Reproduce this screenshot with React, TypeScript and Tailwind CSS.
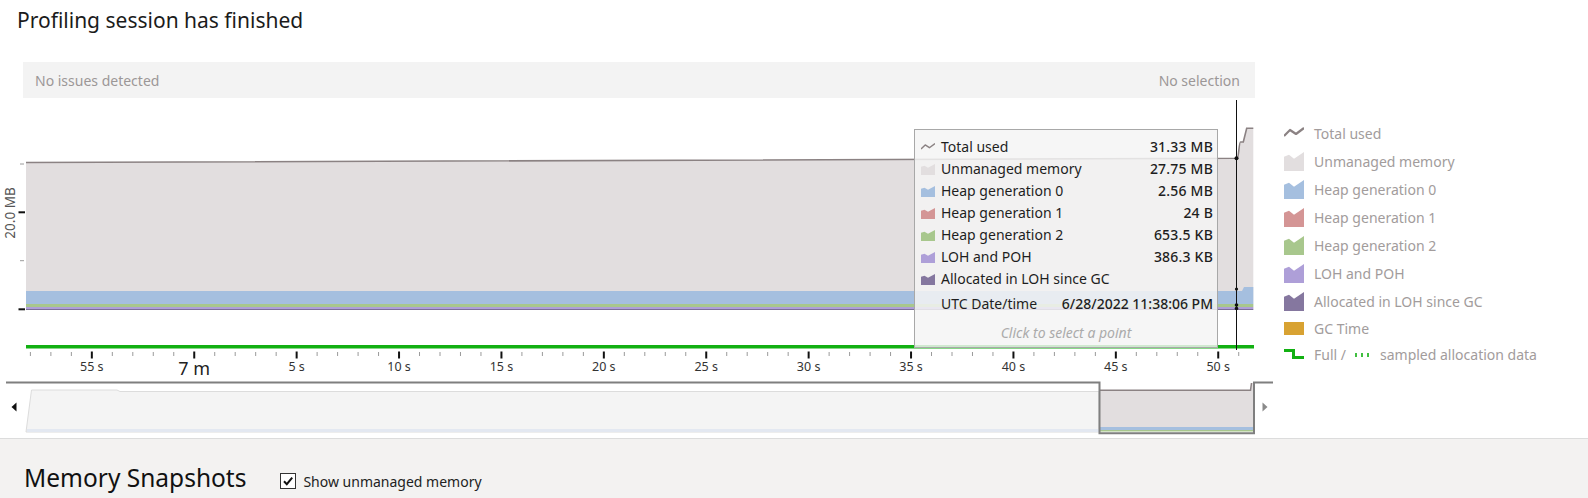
import React from 'react';

const C = {
  total: '#8b8283',
  unmanaged: '#e2dedf',
  gen0: '#a5bfdf',
  gen1: '#d49595',
  gen2: '#a8c78d',
  loh: '#ae9fd8',
  alloc: '#85779f',
  gc: '#d8a232',
  green: '#12b012',
};

const AreaIcon: React.FC<{ color: string; w: number; h: number }> = ({ color, w, h }) => (
  <svg width={w} height={h} viewBox="0 0 20 20" preserveAspectRatio="none" className="shrink-0">
    <path d="M0 20V5L5 3L10 7L20 0V20Z" fill={color} />
  </svg>
);

const LineIcon: React.FC<{ w: number; h: number; sw: number }> = ({ w, h, sw }) => (
  <svg width={w} height={h} viewBox="0 0 20 20" className="shrink-0">
    <path d="M0 13L6 7L12 11L20 5" fill="none" stroke={C.total} strokeWidth={sw} strokeLinejoin="round" />
  </svg>
);

const tooltipRows = [
  { label: 'Total used', value: '31.33 MB', color: '' },
  { label: 'Unmanaged memory', value: '27.75 MB', color: C.unmanaged },
  { label: 'Heap generation 0', value: '2.56 MB', color: C.gen0 },
  { label: 'Heap generation 1', value: '24 B', color: C.gen1 },
  { label: 'Heap generation 2', value: '653.5 KB', color: C.gen2 },
  { label: 'LOH and POH', value: '386.3 KB', color: C.loh },
  { label: 'Allocated in LOH since GC', value: '', color: C.alloc },
];

const legendRows = [
  { label: 'Total used', color: '' },
  { label: 'Unmanaged memory', color: C.unmanaged },
  { label: 'Heap generation 0', color: C.gen0 },
  { label: 'Heap generation 1', color: C.gen1 },
  { label: 'Heap generation 2', color: C.gen2 },
  { label: 'LOH and POH', color: C.loh },
  { label: 'Allocated in LOH since GC', color: C.alloc },
];

const SEC = 20.48;
const X0 = 30.4;
const ticks = Array.from({ length: 60 }, (_, i) => i);

const tickLabel = (i: number) => (i === 3 ? '55 s' : i === 8 ? '7 m' : `${i - 8} s`);

const MemoryChart: React.FC = () => (
  <div className="relative w-[1275px] h-[280px] shrink-0">
    <svg width={1275} height={280} className="block overflow-visible">
      {/* stacked areas */}
      <path
        d="M26 64.5L1237.3 60.3C1238.6 60.3 1239 44 1240.5 44L1243.3 44L1246.7 30.3L1253.3 30.3L1253.3 212L26 212Z"
        fill={C.unmanaged}
      />
      <path d="M26 193H1242L1244 189H1253.3V206H26Z" fill={C.gen0} />
      <rect x={26} y={206} width={1227.3} height={3} fill={C.gen2} />
      <rect x={26} y={209} width={1227.3} height={2} fill={C.loh} />
      <rect x={26} y={211} width={1227.3} height={1} fill="#7d7097" />
      <path
        d="M26 64.5L1237.3 60.3C1238.6 60.3 1239 44 1240.5 44L1243.3 44L1246.7 30.3L1253.3 30.3"
        fill="none"
        stroke={C.total}
        strokeWidth={1.6}
      />

      {/* y axis */}
      <line x1={20} x2={24} y1={66} y2={66} stroke="#9a9a9a" />
      <line x1={18.5} x2={25} y1={114.3} y2={114.3} stroke="#111" strokeWidth={2} />
      <line x1={20} x2={24} y1={162.7} y2={162.7} stroke="#9a9a9a" />
      <line x1={18.5} x2={25} y1={211.3} y2={211.3} stroke="#111" strokeWidth={2} />
      <text
        x={0}
        y={0}
        transform="translate(15 115) rotate(-90)"
        textAnchor="middle"
        fontSize={13.5}
        fill="#555"
        fontFamily="Noto Sans, sans-serif"
      >
        20.0 MB
      </text>

      {/* allocation data line */}
      <rect x={26} y={247} width={1228} height={3.5} fill={C.green} />

      {/* time axis */}
      {ticks.map((i) => {
        const x = X0 + i * SEC;
        const major = i % 5 === 3;
        return major ? (
          <line key={i} x1={x} x2={x} y1={253.5} y2={260.5} stroke="#111" strokeWidth={2} />
        ) : (
          <line key={i} x1={x} x2={x} y1={254} y2={258} stroke="#9a9a9a" />
        );
      })}
      {ticks
        .filter((i) => i % 5 === 3)
        .map((i) => (
          <text
            key={i}
            x={X0 + i * SEC}
            y={i === 8 ? 276.5 : 273}
            textAnchor="middle"
            fontSize={i === 8 ? 18 : 12.5}
            fill={i === 8 ? '#222' : '#333'}
            fontFamily="Noto Sans, sans-serif"
          >
            {tickLabel(i)}
          </text>
        ))}

      {/* cursor */}
      <line x1={1236.5} x2={1236.5} y1={2} y2={252} stroke="#111" />
      <circle cx={1236.5} cy={60.3} r={2} fill="#111" />
      <circle cx={1236.5} cy={191} r={1.6} fill="#111" />
      <circle cx={1236.5} cy={207} r={1.8} fill="#111" />
      <circle cx={1236.5} cy={210.5} r={1.8} fill="#111" />
    </svg>

    {/* tooltip */}
    <div className="absolute left-[914px] top-[31px] w-[304px] h-[219px] border border-[#a8a8a8] bg-[rgba(244,244,244,0.84)] text-[14px] text-[#1e1e1e] pt-[6px]">
      {tooltipRows.map((r) => (
        <div key={r.label} className="flex items-center h-[22px] pl-[6px] pr-[4px]">
          {r.color ? <AreaIcon color={r.color} w={14} h={11} /> : <LineIcon w={14} h={14} sw={2} />}
          <span className="ml-[6px] flex-1 leading-none">{r.label}</span>
          <span className="leading-none font-medium tracking-[0.2px]">{r.value}</span>
        </div>
      ))}
      <div className="flex items-center h-[22px] mt-[3px] pl-[26px] pr-[4px]">
        <span className="flex-1 leading-none">UTC Date/time</span>
        <span className="leading-none font-medium">6/28/2022 11:38:06 PM</span>
      </div>
      <div className="flex items-center justify-center h-[22px] mt-[7px] italic text-[#ababab] leading-none">
        Click to select a point
      </div>
    </div>
  </div>
);

const Overview: React.FC = () => (
  <svg width={1275} height={60} className="block shrink-0">
    <path d="M26 54L31.5 12H117L120 13.5H1099V54Z" fill="#f4f4f4" stroke="#dcdcdc" />
    <rect x={27} y={51} width={1072} height={3} fill="#e3e8f1" />
    <path d="M1100 12.5H1250.5L1251.5 5H1253V49H1100Z" fill={C.unmanaged} />
    <rect x={1100} y={49} width={153} height={3} fill={C.gen0} />
    <rect x={1100} y={52} width={153} height={1.5} fill={C.gen2} />
    <path d="M1100 12.3H1250.5L1251.5 5" fill="none" stroke={C.total} strokeWidth={1.5} />
    <path d="M6 4.5H1099.5V55.3H1254V4.5H1273" fill="none" stroke="#7f7f7f" strokeWidth={2} />
    <polygon points="11.5,29 16.5,24.5 16.5,33.5" fill="#111" />
    <polygon points="1262.5,24.5 1267.5,29 1262.5,33.5" fill="#8a8a8a" />
  </svg>
);

export default function App() {
  return (
    <div className="w-[1588px] h-[498px] bg-white overflow-hidden flex flex-col font-['Noto_Sans','Open_Sans',sans-serif]">
      <div className="h-[62px] shrink-0 pl-[17px] pt-[5px] text-[21px] leading-[30px] text-[#1b1b1b]">
        Profiling session has finished
      </div>

      <div className="flex h-[376px] shrink-0">
        <div className="w-[1275px] shrink-0 flex flex-col">
          <div className="ml-[23px] w-[1232px] h-[36px] shrink-0 bg-[#f3f3f3] flex items-center justify-between pl-[12px] pr-[15px] text-[14px] text-[#9c9797]">
            <span>No issues detected</span>
            <span>No selection</span>
          </div>
          <MemoryChart />
          <Overview />
        </div>

        <div className="flex flex-col pl-[9px] pt-[57px] text-[14px] text-[#a29c9c]">
          {legendRows.map((r) => (
            <div key={r.label} className="flex items-center h-[28px] shrink-0">
              {r.color ? <AreaIcon color={r.color} w={20} h={19} /> : <LineIcon w={20} h={20} sw={2.2} />}
              <span className="ml-[10px]">{r.label}</span>
            </div>
          ))}
          <div className="flex items-center h-[26px] shrink-0">
            <div className="w-[20px] h-[13px] bg-[#d8a232] shrink-0" />
            <span className="ml-[10px]">GC Time</span>
          </div>
          <div className="flex items-center h-[26px] shrink-0">
            <svg width={20} height={20} viewBox="0 0 20 20" className="shrink-0">
              <path d="M0 6.5H9.5V13.5H20" fill="none" stroke={C.green} strokeWidth={3} />
            </svg>
            <span className="ml-[10px]">Full /</span>
            <svg width={20} height={20} viewBox="0 0 20 20" className="shrink-0 ml-[7px]">
              <path d="M3 9V13M9 9V13M15 9V13" stroke={C.green} strokeWidth={1.6} />
            </svg>
            <span className="ml-[7px]">sampled allocation data</span>
          </div>
        </div>
      </div>

      <div className="h-[60px] shrink-0 bg-[#f3f2f1] border-t border-[#dcdcdc] flex items-center pl-[24px] pt-[23px] pb-[4px]">
        <span className="text-[24.5px] leading-[32px] text-[#111]">Memory Snapshots</span>
        <label className="flex items-center ml-[34px] mt-[6px] text-[14px] text-[#222]">
          <span className="w-[16px] h-[16px] border border-[#333] bg-white flex items-center justify-center">
            <svg width={12} height={12} viewBox="0 0 12 12">
              <path d="M2 6.3L4.8 9.2L10.2 2.6" fill="none" stroke="#111" strokeWidth={2} />
            </svg>
          </span>
          <span className="ml-[7px]">Show unmanaged memory</span>
        </label>
      </div>
    </div>
  );
}
